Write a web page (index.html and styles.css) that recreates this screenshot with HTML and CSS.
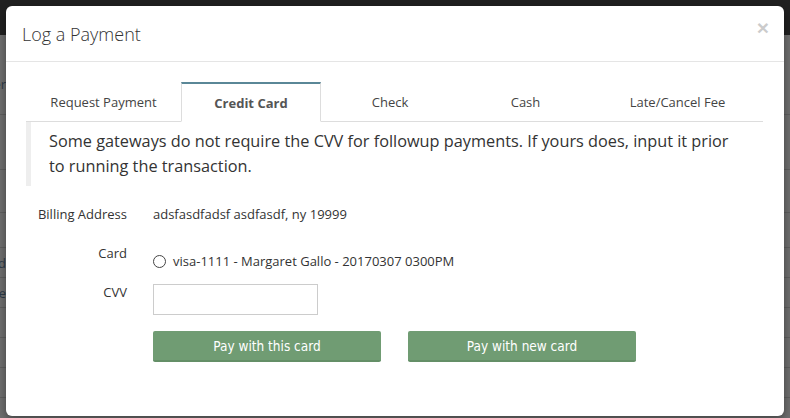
FILE: index.html
```html
<!DOCTYPE html>
<html lang="en">
<head>
    <meta charset="UTF-8">
    <meta name="viewport" content="width=device-width, initial-scale=1.0">
    <title>Log a Payment</title>
    <link rel="stylesheet" href="styles.css">
</head>
<body>
    <!-- Page behind the dimmed backdrop -->
    <div class="page">
        <div class="navbar"></div>
        <div class="page-rows">
            <div class="page-row r-head"><span class="peek peek-high">Customer</span></div>
            <div class="page-row r-mid"></div>
            <div class="page-row r-low"></div>
            <div class="page-row r-small"></div>
            <div class="page-row r-line"><span class="peek">Paid</span></div>
            <div class="page-row r-line"><span class="peek">Fee</span></div>
            <div class="page-row r-line"></div>
            <div class="page-row r-line"></div>
            <div class="page-row r-line"></div>
        </div>
    </div>

    <div class="modal">
        <div class="modal-header">
            <h4 class="modal-title">Log a Payment</h4>
            <button class="close" type="button">&times;</button>
        </div>

        <div class="modal-body">
            <ul class="tabs">
                <li class="tab">Request Payment</li>
                <li class="tab active">Credit Card</li>
                <li class="tab">Check</li>
                <li class="tab">Cash</li>
                <li class="tab">Late/Cancel Fee</li>
            </ul>

            <blockquote class="note">
                Some gateways do not require the CVV for followup payments. If yours does, input it prior to running the transaction.
            </blockquote>

            <form class="pay-form">
                <div class="form-row row-billing">
                    <label class="form-label">Billing Address</label>
                    <div class="form-value">adsfasdfadsf asdfasdf, ny 19999</div>
                </div>
                <div class="form-row row-card">
                    <label class="form-label">Card</label>
                    <div class="form-value radio">
                        <span class="radio-dot"></span>
                        <span>visa-1111 - Margaret Gallo - 20170307 0300PM</span>
                    </div>
                </div>
                <div class="form-row row-cvv">
                    <label class="form-label">CVV</label>
                    <div class="form-value">
                        <input class="cvv-input" type="text">
                    </div>
                </div>
                <div class="form-row row-actions">
                    <div></div>
                    <div class="actions">
                        <button class="btn-pay" type="button">Pay with this card</button>
                        <button class="btn-pay" type="button">Pay with new card</button>
                    </div>
                </div>
            </form>
        </div>
    </div>
</body>
</html>
```

FILE: styles.css
```css
* {
    box-sizing: border-box;
    margin: 0;
    padding: 0;
}

body {
    font-family: 'Open Sans', 'Liberation Sans', sans-serif;
    font-size: 13px;
    color: #333;
    background-color: #6e6e6e;
    width: 790px;
    height: 418px;
    overflow: hidden;
    position: relative;
}

/* backdrop page */
.navbar {
    height: 35px;
    background-color: #202020;
}

.page-row {
    border-bottom: 1px solid #5e5e5e;
    position: relative;
    display: flex;
    align-items: center;
}

.r-head  { height: 80px; }
.r-mid   { height: 55px; }
.r-low   { height: 43px; }
.r-small { height: 35px; }
.r-line  { height: 30px; }

.peek {
    position: absolute;
    right: 784px;
    color: #2d3a48;
    font-size: 13px;
    white-space: nowrap;
}

.peek-high {
    top: 40px;
}

/* modal */
.modal {
    position: absolute;
    top: 6px;
    left: 6px;
    width: 778px;
    height: 410px;
    background-color: #fff;
    border-radius: 6px;
    box-shadow: 0 3px 9px rgba(0, 0, 0, 0.4);
}

.modal-header {
    height: 56px;
    padding: 0 16px;
    border-bottom: 1px solid #e5e5e5;
    display: flex;
    align-items: center;
    justify-content: space-between;
}

.modal-title {
    font-size: 18px;
    font-weight: 300;
    color: #333;
    padding-top: 1px;
}

.close {
    background: none;
    border: none;
    font-family: 'Liberation Sans', sans-serif;
    font-size: 21px;
    font-weight: bold;
    color: #000;
    opacity: 0.2;
    line-height: 1;
    margin-top: -12px;
    margin-right: -1px;
}

.modal-body {
    padding: 20px 21px 0 20px;
}

/* tabs */
.tabs {
    list-style: none;
    display: grid;
    grid-template-columns: 155px 140px 138px 133px 171px;
    height: 40px;
}

.tab {
    display: flex;
    align-items: center;
    justify-content: center;
    color: #444;
    border-bottom: 1px solid #ddd;
}

.tab.active {
    font-weight: bold;
    color: #555;
    border-top: 2px solid #5a8797;
    border-left: 1px solid #ddd;
    border-right: 1px solid #ddd;
    border-bottom-color: transparent;
}

/* note */
.note {
    border-left: 5px solid #eee;
    padding: 7px 18px 7px 18px;
    font-size: 16.3px;
    line-height: 25px;
    color: #333;
}

/* form */
.pay-form {
    margin-top: 18px;
}

.form-row {
    display: grid;
    grid-template-columns: 101px 1fr;
    column-gap: 26px;
    align-items: start;
    line-height: 20px;
}

.form-label {
    text-align: right;
    color: #333;
}

.row-billing {
    margin-bottom: 19px;
}

.row-card {
    margin-bottom: 11px;
}

.row-cvv {
    margin-bottom: 16px;
}

.radio {
    display: flex;
    align-items: center;
    padding-top: 8px;
}

.radio-dot {
    width: 13px;
    height: 13px;
    border: 1px solid #444;
    border-radius: 50%;
    margin-right: 7px;
    flex-shrink: 0;
}

.cvv-input {
    display: block;
    margin-top: 2px;
    width: 165px;
    height: 31px;
    border: 1px solid #ccc;
    background-color: #fff;
}

.actions {
    display: flex;
    gap: 27px;
}

.btn-pay {
    width: 228px;
    height: 31px;
    background-color: #709c73;
    border: none;
    border-bottom: 2px solid #648f67;
    border-radius: 2px;
    color: #fff;
    font-family: 'DejaVu Sans Condensed', 'DejaVu Sans', sans-serif;
    font-stretch: condensed;
    font-size: 13.5px;
}
```
